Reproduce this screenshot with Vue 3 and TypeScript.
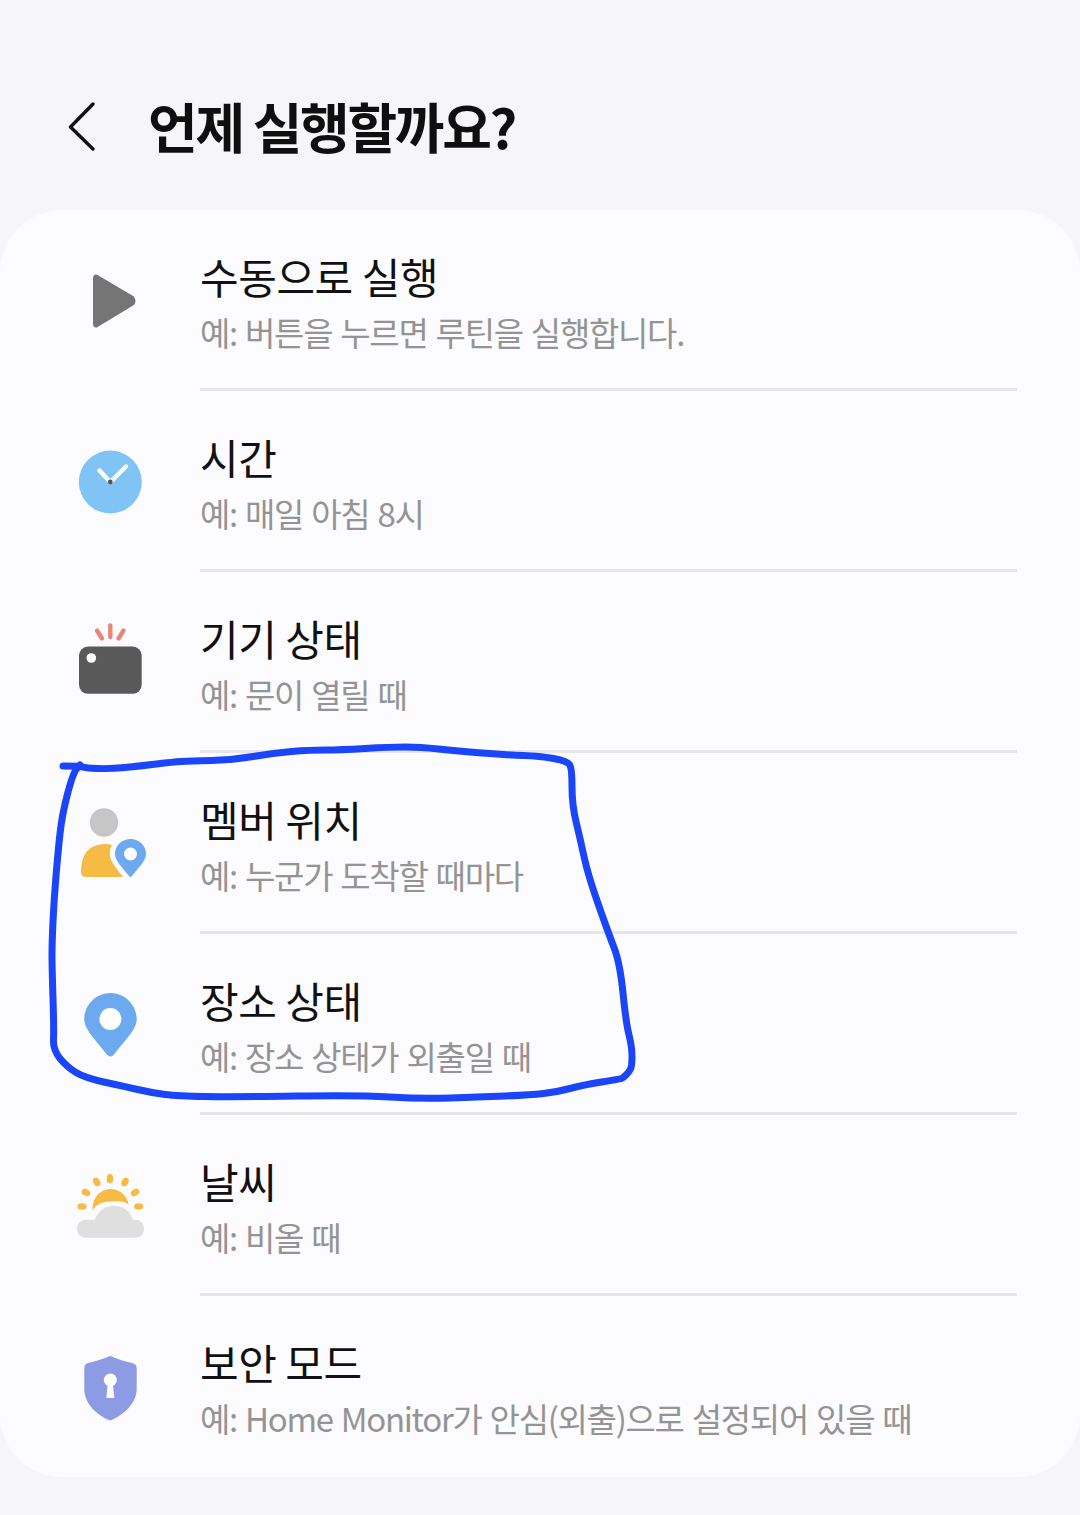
<script setup lang="ts">
interface Item {
  key: string;
  title: string;
  desc: string;
}

const items: Item[] = [
  { key: 'manual', title: '수동으로 실행', desc: '예: 버튼을 누르면 루틴을 실행합니다.' },
  { key: 'time', title: '시간', desc: '예: 매일 아침 8시' },
  { key: 'device', title: '기기 상태', desc: '예: 문이 열릴 때' },
  { key: 'member', title: '멤버 위치', desc: '예: 누군가 도착할 때마다' },
  { key: 'place', title: '장소 상태', desc: '예: 장소 상태가 외출일 때' },
  { key: 'weather', title: '날씨', desc: '예: 비올 때' },
  { key: 'security', title: '보안 모드', desc: '예: Home Monitor가 안심(외출)으로 설정되어 있을 때' },
];

// the pen stroke, smoothed through midpoints
const pen: [number, number][] = [
  [63, 766], [80, 766], [85, 768], [110, 769], [140, 766], [173, 762], [190, 761], [233, 760],
  [273, 753], [310, 750], [340, 750], [390, 747], [420, 747], [457, 751], [507, 755], [540, 756],
  [567, 761], [572, 768], [572, 805], [580, 838], [588, 875], [608, 932], [620, 963], [626, 1023],
  [632, 1047], [632, 1066], [629, 1072], [623, 1078], [620, 1079], [583, 1085], [557, 1092], [530, 1095], [480, 1097],
  [420, 1099], [360, 1095], [233, 1097], [177, 1096], [153, 1093], [127, 1087], [85, 1078],
  [67, 1067], [53, 1050], [54, 1030], [52, 967], [52, 943], [54, 900], [58, 852], [62, 815],
  [73, 773], [80, 765],
];

const penPath = pen.reduce((d, [x, y], i) => {
  if (i === 0) return `M${x} ${y}`;
  const [nx, ny] = pen[i + 1] ?? [x, y];
  return `${d} Q${x} ${y} ${(x + nx) / 2} ${(y + ny) / 2}`;
}, '');
</script>

<template>
  <div class="page">
    <!-- Header -->
    <div class="header">
      <svg class="back" width="30" height="50" viewBox="0 0 30 50">
        <path d="M25 2 L2.5 25 L25 47" fill="none" stroke="#111" stroke-width="3.4" stroke-linecap="round" stroke-linejoin="round" />
      </svg>
      <h1>언제 실행할까요?</h1>
    </div>

    <!-- List -->
    <div class="card">
      <div v-for="item in items" :key="item.key" class="row">
        <div class="icon">
          <svg width="80" height="80" viewBox="0 0 80 80">
            <template v-if="item.key === 'manual'">
              <path d="M24 17 Q24 13.5 27.5 15 L63 36 Q66 40 63 43.5 L27.5 65 Q24 66.5 24 63 Z" fill="#757575" stroke="#757575" stroke-width="2" stroke-linejoin="round" />
            </template>
            <template v-else-if="item.key === 'time'">
              <circle cx="40.3" cy="40" r="31.5" fill="#7fc4f5" />
              <path d="M29.5 28.5 L40.3 40 L56 24.5" fill="none" stroke="#fff" stroke-width="4.4" stroke-linecap="round" stroke-linejoin="round" />
              <circle cx="40.3" cy="40" r="2.4" fill="#555" />
            </template>
            <template v-else-if="item.key === 'device'">
              <rect x="9" y="23.5" width="62.7" height="47.3" rx="9" fill="#595959" />
              <circle cx="21.3" cy="35" r="4.8" fill="#fff" />
              <path d="M27 7.5 L32 15.5 M40.3 2.5 L40.3 14 M53.5 7.5 L48.5 15.5" stroke="#ec8479" stroke-width="4.4" stroke-linecap="round" />
            </template>
            <template v-else-if="item.key === 'member'">
              <circle cx="34" cy="18.5" r="14.3" fill="#c6c6c6" />
              <path d="M11 68 Q11 41 34 40 Q39 40 42 41 Q38 48 41 56 Q44 62 53 73 L16 73 Q11 73 11 68 Z" fill="#f5bb45" />
              <path d="M60.5 35 C69 35 76 41.5 76 50 C76 57 68 64 62 72 Q60.5 74 59 72 C53 64 45 57 45 50 C45 41.5 52 35 60.5 35 Z" fill="#6ca9ef" />
              <circle cx="60.5" cy="50" r="6.5" fill="#fff" />
            </template>
            <template v-else-if="item.key === 'place'">
              <path d="M40.4 8 C55 8 66.7 20 66.7 34 C66.7 43 60 50 43.4 70 Q40.4 73 37.4 70 C21 50 14.3 43 14.3 34 C14.3 20 26 8 40.4 8 Z" fill="#6ca9ef" />
              <circle cx="40.4" cy="34" r="11" fill="#fff" />
            </template>
            <template v-else-if="item.key === 'weather'">
              <path d="M22.7 44.5 C22 30 32 23 41 23 C50 23 57 30 58.7 38.5 C52 34 46 35.5 41 35.5 C33 35.5 26 38 22.7 44.5 Z" fill="#f5bb45" />
              <ellipse cx="40" cy="12.7" rx="3.3" ry="4.6" fill="#f5bb45" />
              <ellipse cx="26.7" cy="16" rx="3.3" ry="4.6" transform="rotate(-30 26.7 16)" fill="#f5bb45" />
              <ellipse cx="55" cy="16" rx="3.3" ry="4.6" transform="rotate(30 55 16)" fill="#f5bb45" />
              <ellipse cx="16" cy="26.5" rx="3.3" ry="4.6" transform="rotate(-60 16 26.5)" fill="#f5bb45" />
              <ellipse cx="65" cy="26.5" rx="3.3" ry="4.6" transform="rotate(60 65 26.5)" fill="#f5bb45" />
              <ellipse cx="12" cy="40.5" rx="4.6" ry="3.2" fill="#f5bb45" />
              <ellipse cx="68.7" cy="40.5" rx="4.6" ry="3.2" fill="#f5bb45" />
              <path d="M16 71.8 C4 71.8 4 53.8 16 53.8 L25 53.8 C30 35 58 35 63 53.8 L65 53.8 C77 53.8 77 71.8 65 71.8 Z" fill="#dfdfdf" />
            </template>
            <template v-else>
              <path d="M40.3 9 Q52 14 62 16 Q66.7 17 66.7 21 L66.7 42 C66.7 56 54 68 40.3 73.5 C26 68 14.3 56 14.3 42 L14.3 21 Q14.3 17 18 16 Q28 14 40.3 9 Z" fill="#8d9ae4" />
              <circle cx="40.3" cy="33" r="6.5" fill="#fff" />
              <path d="M37.8 36 L42.8 36 L44.3 51 L36.3 51 Z" fill="#fff" />
            </template>
          </svg>
        </div>
        <div class="text">
          <div class="title">{{ item.title }}</div>
          <div class="desc">{{ item.desc }}</div>
        </div>
      </div>
    </div>

    <!-- Hand-drawn annotation -->
    <svg class="scribble" width="1080" height="1515" viewBox="0 0 1080 1515">
      <path :d="penPath" fill="none" stroke="#1a45f8" stroke-width="7" stroke-linecap="round" stroke-linejoin="round" />
    </svg>
  </div>
</template>

<style scoped>
.page {
  position: relative;
  width: 1080px;
  height: 1515px;
  overflow: hidden;
  background: #f6f6f8;
  font-family: "Noto Sans CJK KR", "Noto Sans", sans-serif;
}

.header {
  height: 210px;
  padding: 44px 0 0 68px;
  box-sizing: border-box;
  display: flex;
  align-items: center;
}
.header h1 {
  margin: 0 0 2px 50px;
  font-size: 54px;
  line-height: 72px;
  font-weight: 700;
  color: #0f0f0f;
  letter-spacing: -2.3px;
}

.card {
  height: 1267px;
  background: #fcfcff;
  border-radius: 62px;
  overflow: hidden;
}

.row {
  height: 181px;
  box-sizing: border-box;
  display: flex;
  align-items: center;
}

.icon {
  width: 200px;
  padding-left: 70px;
  box-sizing: border-box;
  flex-shrink: 0;
  display: flex;
}

.text {
  flex: 0 0 817px;
  height: 100%;
  box-sizing: border-box;
  padding-top: 36px;
  border-bottom: 3px solid #e7e7e9;
}
.row:last-child .text { border-bottom: none; }

.title {
  font-size: 42px;
  line-height: 60px;
  color: #111;
  letter-spacing: -0.45px;
}
.desc {
  margin-top: 2px;
  font-size: 33px;
  line-height: 48px;
  color: #949494;
  letter-spacing: -1.3px;
  word-spacing: 2px;
}

.scribble {
  position: absolute;
  left: 0;
  top: 0;
  pointer-events: none;
}
</style>
